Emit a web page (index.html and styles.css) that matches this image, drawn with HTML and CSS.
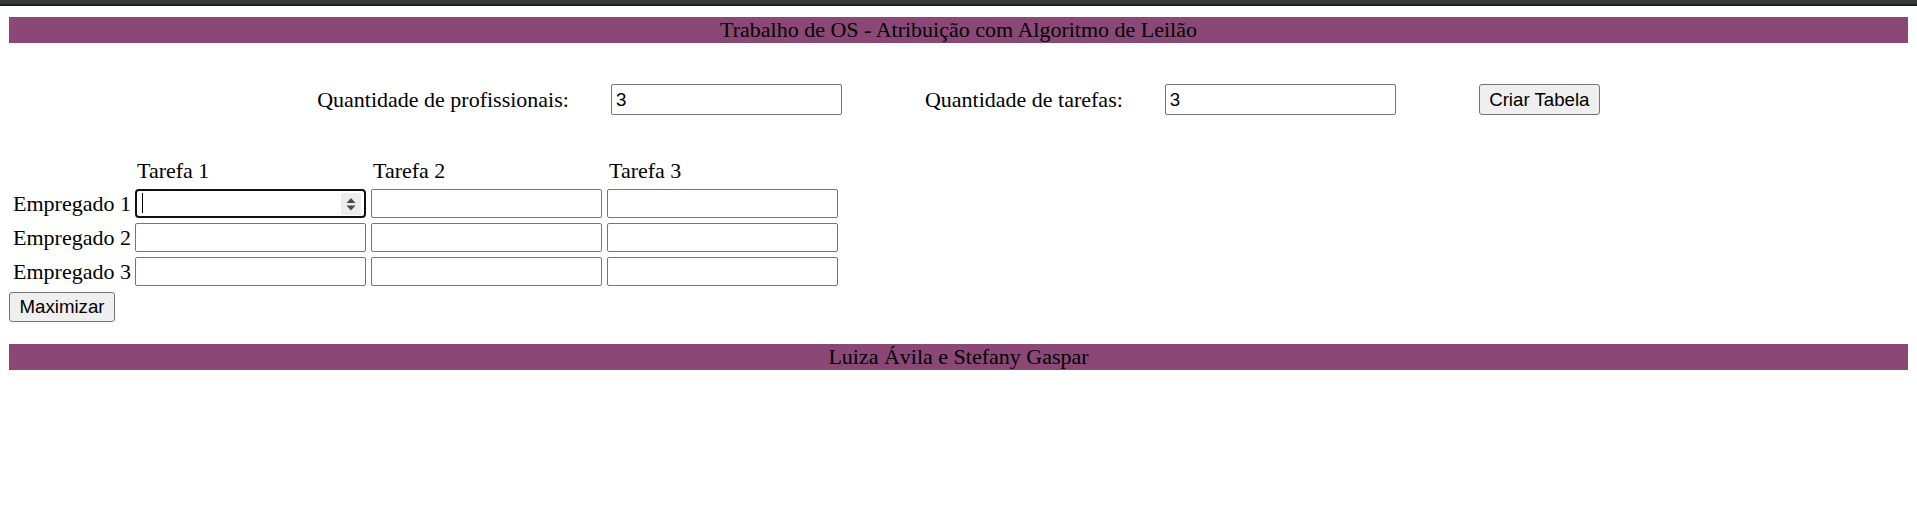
FILE: index.html
```html
<!DOCTYPE html>
<html lang="pt-BR">
<head>
<meta charset="utf-8">
<title>Trabalho de OS - Atribuição com Algoritmo de Leilão</title>
<link rel="stylesheet" href="styles.css">
</head>
<body>
<div class="topbar"></div>
<main class="page">
  <div class="banner banner-head">Trabalho de OS - Atribuição com Algoritmo de Leilão</div>

  <div class="controls">
    <div class="field">
      <label class="field-label" for="qp">Quantidade de profissionais:</label>
      <input class="txt" id="qp" type="text" value="3">
    </div>
    <div class="field">
      <label class="field-label" for="qt">Quantidade de tarefas:</label>
      <input class="txt" id="qt" type="text" value="3">
    </div>
    <button class="btn btn-create" type="button">Criar Tabela</button>
  </div>

  <div class="matrix">
    <div class="corner"></div>
    <div class="col-head">Tarefa 1</div>
    <div class="col-head">Tarefa 2</div>
    <div class="col-head">Tarefa 3</div>

    <div class="row-head">Empregado 1</div>
    <div class="cell">
      <input class="num focused" type="text" value="">
      <span class="caret"></span>
      <span class="spin">
        <svg width="20" height="22" viewBox="0 0 20 22">
          <path d="M5.5 10 L10 5 L14.5 10 Z" fill="#4a4a4a"/>
          <path d="M5.5 12.5 L10 17.5 L14.5 12.5 Z" fill="#4a4a4a"/>
        </svg>
      </span>
    </div>
    <div class="cell"><input class="num" type="text" value=""></div>
    <div class="cell"><input class="num" type="text" value=""></div>

    <div class="row-head">Empregado 2</div>
    <div class="cell"><input class="num" type="text" value=""></div>
    <div class="cell"><input class="num" type="text" value=""></div>
    <div class="cell"><input class="num" type="text" value=""></div>

    <div class="row-head">Empregado 3</div>
    <div class="cell"><input class="num" type="text" value=""></div>
    <div class="cell"><input class="num" type="text" value=""></div>
    <div class="cell"><input class="num" type="text" value=""></div>
  </div>

  <button class="btn btn-max" type="button">Maximizar</button>

  <div class="banner banner-foot">Luiza Ávila e Stefany Gaspar</div>
</main>
</body>
</html>
```

FILE: styles.css
```css
html, body {
  margin: 0;
  padding: 0;
  background: #ffffff;
}

body {
  font-family: "Liberation Serif", "Times New Roman", serif;
  font-size: 22px;
  color: #000000;
}

.topbar {
  height: 4px;
  background: #37383c;
  border-bottom: 2px solid #1e1f22;
}

.page {
  padding: 0 9px;
}

.banner {
  height: 26px;
  line-height: 26px;
  background: #8b4877;
  text-align: center;
  white-space: nowrap;
}

.banner-head {
  margin-top: 11px;
}

.banner-foot {
  margin-top: 22px;
}

.controls {
  margin-top: 41px;
  height: 31px;
  display: flex;
  justify-content: center;
  align-items: center;
  gap: 83px;
}

.field {
  display: flex;
  align-items: center;
  gap: 42px;
}

.field-label {
  line-height: 26px;
  white-space: nowrap;
}

.txt,
.num {
  box-sizing: border-box;
  width: 231px;
  margin: 0;
  border: 1px solid #767676;
  border-radius: 2px;
  padding: 0 4px;
  background: #ffffff;
  font-family: "Liberation Sans", Arial, sans-serif;
  font-size: 18.67px;
  color: #000000;
  outline: none;
}

.txt {
  height: 31px;
}

.num {
  height: 29px;
  display: block;
}

.num.focused {
  border: 2px solid #101010;
  border-radius: 4px;
}

.btn {
  box-sizing: border-box;
  margin: 0;
  padding: 0;
  background: #efefef;
  border: 1px solid #767676;
  border-radius: 3px;
  font-family: "Liberation Sans", Arial, sans-serif;
  font-size: 18.67px;
  color: #000000;
  text-align: center;
}

.btn-create {
  width: 121px;
  height: 31px;
}

.btn-max {
  display: block;
  margin-top: 6px;
  width: 106px;
  height: 30px;
}

.matrix {
  margin-top: 43px;
  margin-left: 4px;
  display: grid;
  grid-template-columns: 117px repeat(3, 231px);
  grid-template-rows: 26px repeat(3, 29px);
  column-gap: 5px;
  row-gap: 5px;
}

.col-head {
  line-height: 26px;
  padding-left: 2px;
  white-space: nowrap;
}

.row-head {
  align-self: center;
  line-height: 26px;
  white-space: nowrap;
}

.cell {
  position: relative;
}

.caret {
  position: absolute;
  left: 7px;
  top: 4px;
  width: 1px;
  height: 20px;
  background: #000000;
}

.spin {
  position: absolute;
  right: 5px;
  top: 4px;
  width: 20px;
  height: 22px;
  background: #ededed;
  display: block;
}

.spin svg {
  display: block;
}
```
